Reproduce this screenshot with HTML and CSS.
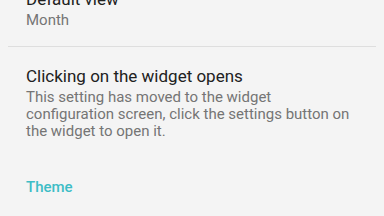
FILE: index.html
```html
<!DOCTYPE html>
<html lang="en">
<head>
  <meta charset="UTF-8" />
  <meta name="viewport" content="width=device-width, initial-scale=1.0"/>
  <title>Widget settings</title>
  <link rel="stylesheet" href="styles.css">
</head>
<body>
  <div class="settings">
    <div class="pref pref-first">
      <div class="pref-title">Default view</div>
      <div class="pref-summary">Month</div>
    </div>
    <div class="divider"></div>
    <div class="pref pref-info">
      <div class="pref-title">Clicking on the widget opens</div>
      <div class="pref-summary">This setting has moved to the widget configuration screen, click the settings button on the widget to open it.</div>
    </div>
    <div class="category">Theme</div>
  </div>
</body>
</html>
```

FILE: styles.css
```css
body {
  margin: 0;
  background: #f4f4f4;
  font-family: Roboto, 'Noto Sans', Arial, sans-serif;
  overflow: hidden;
}

.settings {
  margin-top: -11.3px;
}

.pref {
  padding: 0 26px;
}

.pref-first { padding-bottom: 17.3px; }
.pref-info { padding-top: 19.2px; }

.pref-title {
  font-size: 17px;
  line-height: 20px;
  color: #212121;
}

.pref-summary {
  margin-top: 3px;
  font-size: 15px;
  line-height: 17px;
  color: #757575;
}

.divider {
  height: 1px;
  margin: 0 8px;
  background: #dedede;
}

.category {
  padding: 39.2px 26px 0;
  font-size: 15px;
  line-height: 17px;
  font-weight: 500;
  color: #3dbdc6;
}
```
